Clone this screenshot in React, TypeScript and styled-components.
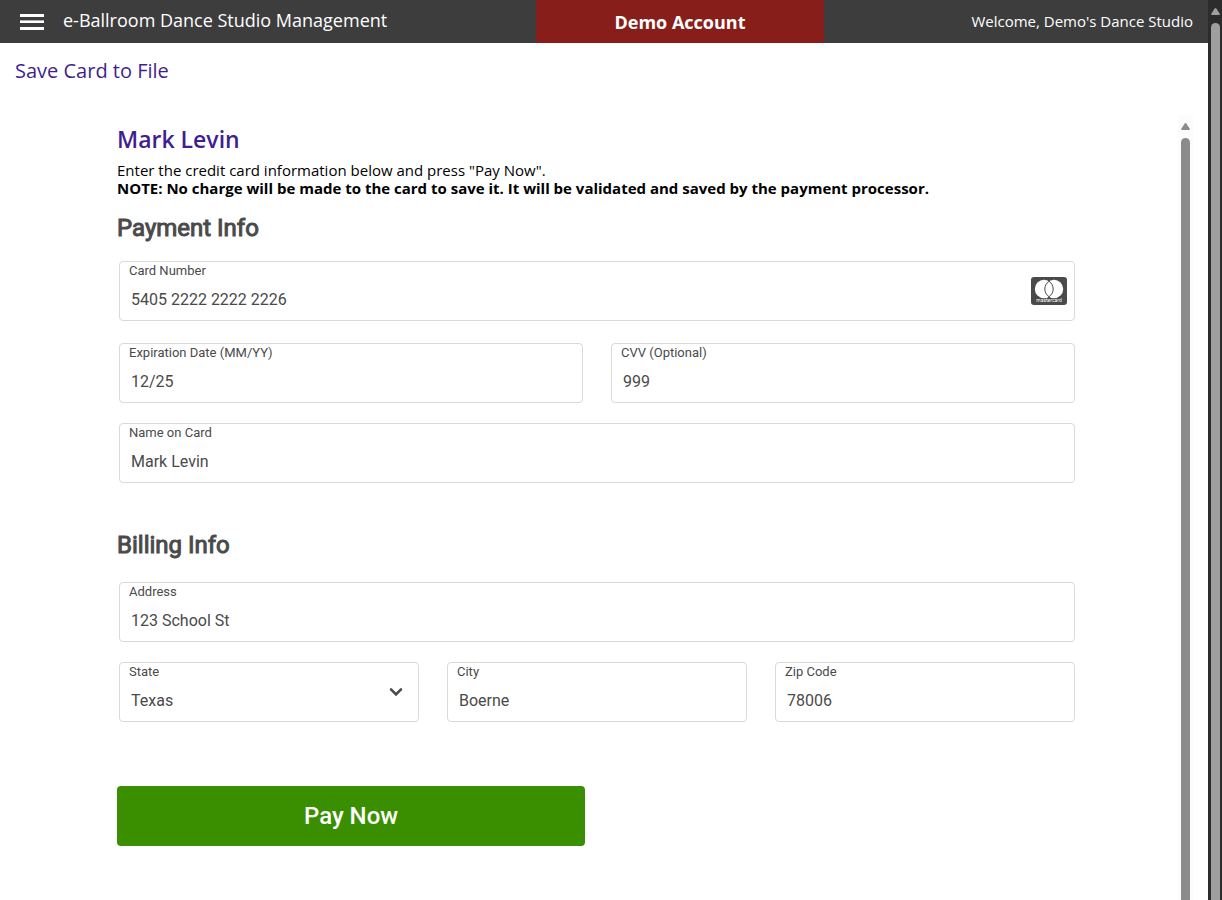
import React, { useId } from "react";
import styled, { createGlobalStyle } from "styled-components";

const ui = `"Segoe UI", "Open Sans", "Noto Sans", sans-serif`;
const form = `Roboto, "Liberation Sans", sans-serif`;

const GlobalStyle = createGlobalStyle`
  * { box-sizing: border-box; }
  body { margin: 0; background: #fff; font-family: ${ui}; color: #000; }
  h1, h2, h3, p { margin: 0; }
`;

const Shell = styled.div`
  display: flex;
  min-height: 100vh;
`;

const Page = styled.div`
  flex: 1;
  min-width: 0;
  display: flex;
  flex-direction: column;
`;

const TopBar = styled.header`
  display: grid;
  grid-template-columns: 67fr 36fr 48fr;
  height: 43px;
  background: #3d3d3d;
  color: #fff;
`;

const Brand = styled.div`
  display: flex;
  align-items: center;
  gap: 19px;
  padding: 0 0 4px 20px;
  font-size: 18px;
  line-height: 24px;
  white-space: nowrap;
`;

const MenuButton = styled.button`
  display: flex;
  padding: 4px 0 0;
  border: 0;
  background: none;
  color: inherit;
  cursor: pointer;
`;

const AccountBanner = styled.div`
  display: flex;
  align-items: center;
  justify-content: center;
  background: #871e19;
  font-size: 18px;
  font-weight: 700;
  white-space: nowrap;
`;

const Welcome = styled.div`
  display: flex;
  align-items: center;
  justify-content: flex-end;
  padding: 0 15px 2px 0;
  font-size: 15px;
  white-space: nowrap;
`;

const PageTitle = styled.h1`
  padding: 14px 15px 0;
  color: #3f1f8f;
  font-size: 20px;
  line-height: 28px;
  font-weight: 400;
`;

const Frame = styled.div`
  flex: 1;
  display: flex;
  margin: 30px 15px 0 16px;
`;

const FrameBody = styled.div`
  flex: 1;
  min-width: 0;
`;

const Content = styled.main`
  max-width: 960px;
  margin: 0 auto;
  padding: 8px 0 54px;
`;

const Customer = styled.h2`
  color: #3f1f8f;
  font-size: 23px;
  line-height: 32px;
  font-weight: 600;
`;

const Note = styled.p<{ $strong?: boolean }>`
  font-size: 15px;
  line-height: 18px;
  font-weight: ${(p) => (p.$strong ? 700 : 400)};
`;

const Notes = styled.div`
  padding-top: 6px;
`;

const Section = styled.section<{ $top: number }>`
  padding-top: ${(p) => p.$top}px;
  font-family: ${form};
  color: #4a4a4a;
`;

const SectionTitle = styled.h3`
  font-size: 24px;
  line-height: 26px;
  font-weight: 400;
  -webkit-text-stroke: 1px currentColor;
`;

const Rows = styled.div<{ $top: number }>`
  display: flex;
  flex-direction: column;
  gap: 20px;
  padding: ${(p) => p.$top}px 2px 0;
`;

const Row = styled.div<{ $cols?: number; $after?: number }>`
  display: grid;
  grid-template-columns: repeat(${(p) => p.$cols ?? 1}, minmax(0, 1fr));
  gap: 28px;
  padding-bottom: ${(p) => p.$after ?? 0}px;
`;

const FieldBox = styled.div`
  position: relative;
  height: 60px;
  padding-top: 1px;
  border: 1px solid #d9d9d9;
  border-radius: 4px;
  background: #fff;
`;

const FieldLabel = styled.label`
  display: block;
  padding-left: 9px;
  font-size: 13px;
  line-height: 16px;
`;

const Input = styled.input`
  display: block;
  width: 100%;
  height: 41px;
  padding: 0 11px;
  border: 0;
  outline: 0;
  background: none;
  color: inherit;
  font: 400 16px ${form};
`;

const Select = styled.select`
  display: block;
  width: 100%;
  height: 41px;
  padding: 0 11px;
  border: 0;
  outline: 0;
  appearance: none;
  background: none;
  color: inherit;
  font: 400 16px ${form};
`;

const Adornment = styled.span<{ $right: number }>`
  position: absolute;
  top: 0;
  bottom: 0;
  right: ${(p) => p.$right}px;
  display: flex;
  align-items: center;
  pointer-events: none;
`;

const PayButton = styled.button`
  display: block;
  width: 468px;
  max-width: 100%;
  height: 60px;
  margin-top: 64px;
  border: 0;
  border-radius: 4px;
  background: #3a8f00;
  color: #fff;
  font: 500 24px ${form};
  cursor: pointer;
`;

const Track = styled.div<{ $width: number; $color: string; $top: number }>`
  flex: none;
  display: flex;
  flex-direction: column;
  align-items: center;
  gap: 7px;
  width: ${(p) => p.$width}px;
  padding-top: ${(p) => p.$top}px;
  background: ${(p) => p.$color};
`;

const Thumb = styled.div<{ $color: string }>`
  flex: 1;
  width: 9px;
  border-radius: 5px 5px 0 0;
  background: ${(p) => p.$color};
`;

function Scrollbar(p: { width: number; track: string; thumb: string; top: number }) {
  return (
    <Track $width={p.width} $color={p.track} $top={p.top} aria-hidden="true">
      <svg width="9" height="8" viewBox="0 0 9 8">
        <path d="M3.7 .6Q4.5 -.5 5.3 .6L8.8 5.7Q9 7 8 7H1Q0 7 .2 5.7Z" fill={p.thumb} />
      </svg>
      <Thumb $color={p.thumb} />
    </Track>
  );
}

function MenuIcon() {
  return (
    <svg width="24" height="16" viewBox="0 0 24 16" fill="#fff" aria-hidden="true">
      <rect width="24" height="3" />
      <rect y="6" width="24" height="1" opacity=".6" />
      <rect y="7" width="24" height="2" />
      <rect y="13" width="24" height="3" />
    </svg>
  );
}

function CardBrandIcon() {
  return (
    <svg width="36" height="28" viewBox="0 0 36 28" role="img" aria-label="Mastercard">
      <rect width="36" height="28" rx="3" fill="#4a4a4a" />
      <circle cx="13" cy="12" r="9.2" fill="#fff" />
      <circle cx="23" cy="12" r="9.2" fill="#fff" />
      <path
        d="M18 4.3a9.2 9.2 0 0 1 0 15.4a9.2 9.2 0 0 1 0-15.4Z"
        fill="#fff"
        stroke="#4a4a4a"
        strokeWidth="1"
      />
      <text
        x="18"
        y="25.2"
        textAnchor="middle"
        fill="#fff"
        fontFamily="Roboto, sans-serif"
        fontSize="5"
        fontWeight="400"
      >
        mastercard
      </text>
    </svg>
  );
}

function ChevronIcon() {
  return (
    <svg width="14" height="10" viewBox="0 0 14 10" aria-hidden="true">
      <path
        d="M2 2.3L7 7.3L12 2.3"
        fill="none"
        stroke="#4a4a4a"
        strokeWidth="2.6"
        strokeLinecap="round"
      />
    </svg>
  );
}

function TextField({
  label,
  value,
  icon,
}: {
  label: string;
  value: string;
  icon?: React.ReactNode;
}) {
  const id = useId();
  return (
    <FieldBox>
      <FieldLabel htmlFor={id}>{label}</FieldLabel>
      <Input id={id} type="text" defaultValue={value} />
      {icon && <Adornment $right={7}>{icon}</Adornment>}
    </FieldBox>
  );
}

function SelectField({ label, options }: { label: string; options: string[] }) {
  const id = useId();
  return (
    <FieldBox>
      <FieldLabel htmlFor={id}>{label}</FieldLabel>
      <Select id={id} defaultValue={options[0]}>
        {options.map((o) => (
          <option key={o}>{o}</option>
        ))}
      </Select>
      <Adornment $right={15}>
        <ChevronIcon />
      </Adornment>
    </FieldBox>
  );
}

export default function App() {
  return (
    <Shell>
      <GlobalStyle />
      <Page>
        <TopBar>
          <Brand>
            <MenuButton aria-label="Menu">
              <MenuIcon />
            </MenuButton>
            e-Ballroom Dance Studio Management
          </Brand>
          <AccountBanner>Demo Account</AccountBanner>
          <Welcome>Welcome, Demo's Dance Studio</Welcome>
        </TopBar>
        <PageTitle>Save Card to File</PageTitle>
        <Frame>
          <FrameBody>
            <Content>
              <Customer>Mark Levin</Customer>
              <Notes>
                <Note>Enter the credit card information below and press "Pay Now".</Note>
                <Note $strong>
                  NOTE: No charge will be made to the card to save it. It will be validated and
                  saved by the payment processor.
                </Note>
              </Notes>
              <form onSubmit={(e) => e.preventDefault()}>
                <Section $top={18}>
                  <SectionTitle>Payment Info</SectionTitle>
                  <Rows $top={20}>
                    <Row $after={2}>
                      <TextField
                        label="Card Number"
                        value="5405 2222 2222 2226"
                        icon={<CardBrandIcon />}
                      />
                    </Row>
                    <Row $cols={2}>
                      <TextField label="Expiration Date (MM/YY)" value="12/25" />
                      <TextField label="CVV (Optional)" value="999" />
                    </Row>
                    <Row>
                      <TextField label="Name on Card" value="Mark Levin" />
                    </Row>
                  </Rows>
                </Section>
                <Section $top={49}>
                  <SectionTitle>Billing Info</SectionTitle>
                  <Rows $top={24}>
                    <Row>
                      <TextField label="Address" value="123 School St" />
                    </Row>
                    <Row $cols={3}>
                      <SelectField label="State" options={["Texas"]} />
                      <TextField label="City" value="Boerne" />
                      <TextField label="Zip Code" value="78006" />
                    </Row>
                  </Rows>
                </Section>
                <PayButton type="submit">Pay Now</PayButton>
              </form>
            </Content>
          </FrameBody>
          <Scrollbar width={15} track="#fcfcfc" thumb="#8b8b8b" top={8} />
        </Frame>
      </Page>
      <Scrollbar width={14} track="#2c2c2c" thumb="#9f9f9f" top={8} />
    </Shell>
  );
}
